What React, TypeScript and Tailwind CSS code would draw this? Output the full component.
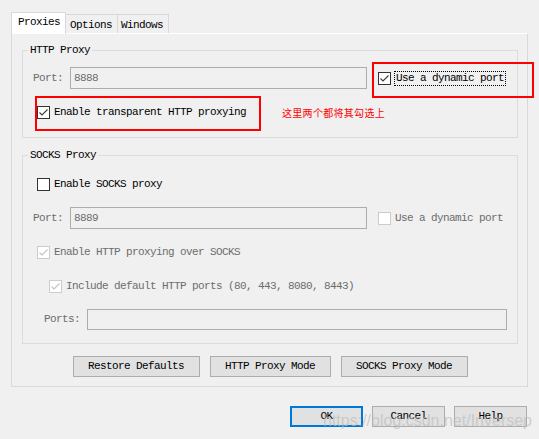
import type { ReactNode } from "react";

const Check = ({ checked = false, disabled = false }: { checked?: boolean; disabled?: boolean }) => (
    <span
        className={`flex w-[13px] h-[13px] shrink-0 items-center justify-center border ${
            disabled ? "border-[#cccccc] bg-white" : "border-[#333333] bg-white"
        }`}
    >
        {checked && (
            <svg width="11" height="11" viewBox="0 0 11 11">
                <path d="M1.5 5.5 L4 8 L9.5 2.5" fill="none" stroke={disabled ? "#c4c4c4" : "#3c3c3c"} strokeWidth="1.1" />
            </svg>
        )}
    </span>
);

const Group = ({ title, className, children }: { title: string; className?: string; children: ReactNode }) => (
    <div className={`relative border border-[#dcdcdc] ${className ?? ""}`}>
        <span className="absolute -top-[8px] left-[5px] px-[2px] bg-[#f0f0f0] leading-[14px] text-black">{title}</span>
        {children}
    </div>
);

const Field = ({ value, w, h = "h-[22px]" }: { value?: string; w: string; h?: string }) => (
    <div className={`${w} ${h} flex items-center border border-[#adadad] bg-[#f0f0f0] px-[3px] text-[#6d6d6d]`}>{value}</div>
);

const Btn = ({ label, w, focus = false }: { label: string; w: string; focus?: boolean }) => (
    <div
        className={`${w} h-[21px] flex items-center justify-center bg-[#e1e1e1] text-black ${
            focus ? "border-2 border-[#0078d7]" : "border border-[#adadad]"
        }`}
    >
        {label}
    </div>
);

export default function App() {
    return (
        <div className="relative w-[539px] h-[439px] overflow-hidden bg-[#f0f0f0] text-[11px] tracking-[-0.6px] font-['Liberation_Mono',monospace] leading-none">
            <div className="pt-3 pl-[11px] pr-3">
                <div className="flex items-end h-[21px]">
                    <div className="relative z-10 w-[55px] h-[22px] -mb-px border border-b-0 border-[#d9d9d9] bg-white pl-[6px] pt-[4px] text-black">Proxies</div>
                    <div className="w-[52px] h-[19px] border-t border-r border-[#d9d9d9] pl-[4px] pt-[5px] text-black">Options</div>
                    <div className="w-[51px] h-[19px] border-t border-r border-[#d9d9d9] pl-[3px] pt-[5px] text-black">Windows</div>
                </div>
                <div className="w-[517px] h-[354px] border border-[#d9d9d9] border-t-white pl-[10px] pr-[9px]">
                    <Group title="HTTP Proxy" className="mt-[16px] pb-[18px]">
                        <div className="mt-[16px] flex items-center h-[22px] pl-[10px]">
                            <span className="w-[37px] text-[#6d6d6d]">Port:</span>
                            <Field value="8888" w="w-[297px]" />
                            <span className="ml-[11px]">
                                <Check checked />
                            </span>
                            <span className="ml-[4px] px-px py-[1px] outline outline-1 outline-dotted outline-black text-black">Use a dynamic port</span>
                        </div>
                        <div className="mt-[17px] flex items-center h-[13px] pl-[14px]">
                            <Check checked />
                            <span className="ml-[4px] text-black">Enable transparent HTTP proxying</span>
                        </div>
                    </Group>
                    <Group title="SOCKS Proxy" className="mt-[17px] pb-[13px]">
                        <div className="mt-[22px] flex items-center h-[13px] pl-[14px]">
                            <Check />
                            <span className="ml-[4px] text-black">Enable SOCKS proxy</span>
                        </div>
                        <div className="mt-[16px] flex items-center h-[22px] pl-[10px]">
                            <span className="w-[37px] text-[#6d6d6d]">Port:</span>
                            <Field value="8889" w="w-[297px]" />
                            <span className="ml-[11px]">
                                <Check disabled />
                            </span>
                            <span className="ml-[4px] text-[#6d6d6d]">Use a dynamic port</span>
                        </div>
                        <div className="mt-[17px] flex items-center h-[13px] pl-[14px]">
                            <Check checked disabled />
                            <span className="ml-[4px] text-[#6d6d6d]">Enable HTTP proxying over SOCKS</span>
                        </div>
                        <div className="mt-[21px] flex items-center h-[13px] pl-[26px]">
                            <Check checked disabled />
                            <span className="ml-[4px] text-[#6d6d6d]">Include default HTTP ports (80, 443, 8080, 8443)</span>
                        </div>
                        <div className="mt-[16px] flex items-center h-[21px] pl-[21px]">
                            <span className="w-[43px] text-[#6d6d6d]">Ports:</span>
                            <Field w="w-[420px]" h="h-[21px]" />
                        </div>
                    </Group>
                    <div className="mt-[12px] flex justify-center gap-[10px]">
                        <Btn label="Restore Defaults" w="w-[127px]" />
                        <Btn label="HTTP Proxy Mode" w="w-[121px]" />
                        <Btn label="SOCKS Proxy Mode" w="w-[127px]" />
                    </div>
                </div>
                <div className="mt-[19px] flex justify-end gap-[9px]">
                    <Btn label="OK" w="w-[73px]" focus />
                    <Btn label="Cancel" w="w-[73px]" />
                    <Btn label="Help" w="w-[73px]" />
                </div>
            </div>

            {/* annotations drawn over the dialog */}
            <div className="absolute left-[372px] top-[62px] w-[162px] h-[36px] border-2 border-[#ff0000]" />
            <div className="absolute left-[35px] top-[96px] w-[226px] h-[35px] border-2 border-[#ff0000]" />
            <div className="absolute left-[282px] top-[106px] text-[10px] tracking-[0.3px] text-[#ff0000] font-['Noto_Sans_CJK_SC',sans-serif] leading-[14px]">
                这里两个都将其勾选上
            </div>
            <div className="absolute left-[323px] top-[411px] text-[16px] tracking-normal leading-[20px] text-[#bdbdbd]/70 font-['Liberation_Sans',sans-serif]">
                https://blog.csdn.net/Inversep
            </div>
        </div>
    );
}
